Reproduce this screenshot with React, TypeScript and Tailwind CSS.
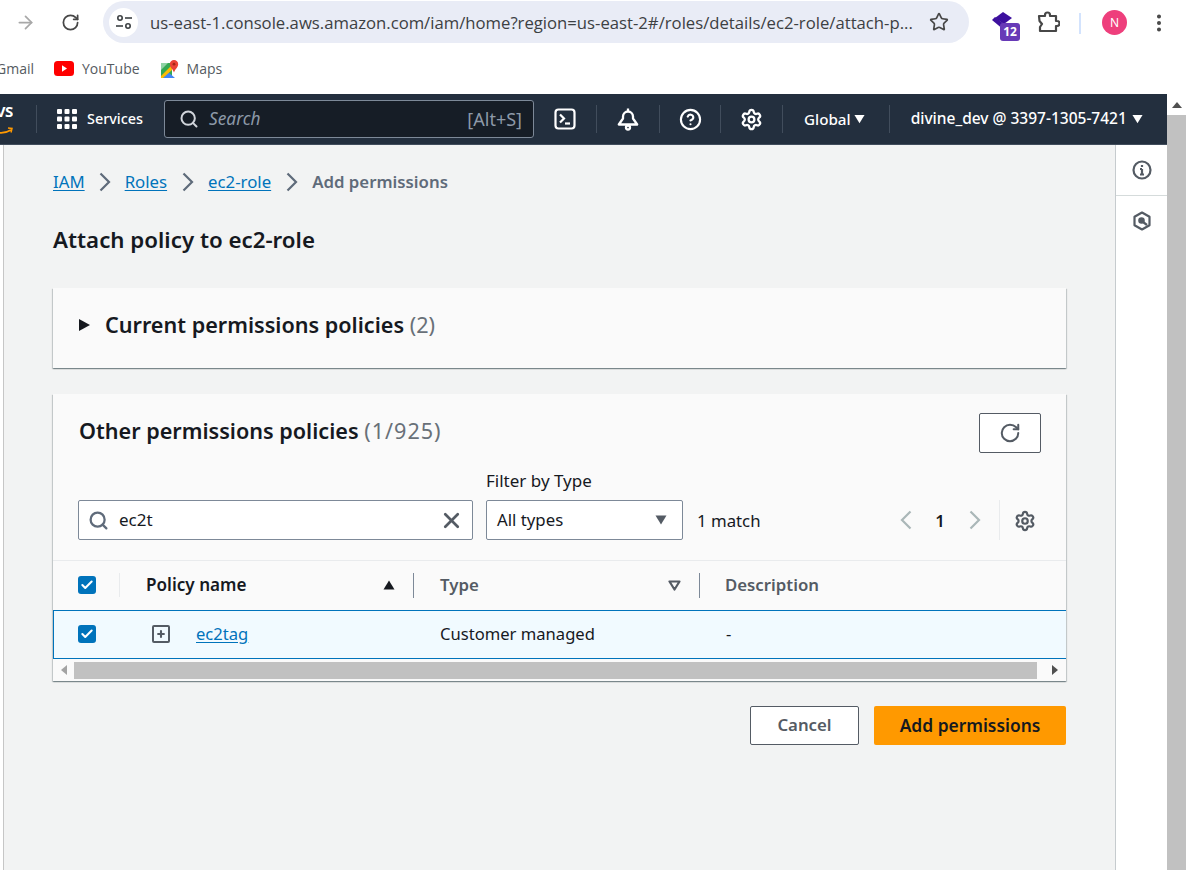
import { ArrowRight, RotateCw, Star, Search, X, Settings, Check, Plus, CircleHelp, EllipsisVertical } from 'lucide-react'

const font = { fontFamily: '"Noto Sans", sans-serif' }

function Divider({ className = '' }: { className?: string }) {
  return <div className={`w-px h-[28px] bg-[#414d5c] shrink-0 ${className}`} />
}

function Tune() {
  return (
    <svg width="20" height="20" viewBox="0 0 20 20" fill="none" stroke="#3c4043" strokeWidth="1.6">
      <circle cx="6" cy="6" r="2.2" />
      <path d="M11 6h7" />
      <path d="M2 14h7" />
      <circle cx="14" cy="14" r="2.2" />
    </svg>
  )
}

function Caret({ className = '' }: { className?: string }) {
  return (
    <svg width="12" height="10" viewBox="0 0 12 10" className={className}>
      <path d="M0.5 0.5h11L6 9.5z" fill="currentColor" />
    </svg>
  )
}

function Chevron({ left = false, className = '' }: { left?: boolean; className?: string }) {
  return (
    <svg width="12" height="20" viewBox="0 0 12 20" fill="none" stroke="currentColor" strokeWidth="2.2" className={`shrink-0 ${className}`}>
      <path d={left ? 'M10.5 1.500L2 10l8.500 8.500' : 'M1.500 1.500L10 10l-8.500 8.500'} />
    </svg>
  )
}

function Checkbox() {
  return (
    <div className="w-[18px] h-[18px] rounded-[3px] bg-[#0073bb] flex items-center justify-center">
      <Check size={14} strokeWidth={3.500} className="text-white" />
    </div>
  )
}

function BrowserBar() {
  return (
    <div className="h-[47px] bg-white flex items-start shrink-0">
      <ArrowRight size={21} strokeWidth={2} className="text-[#a8a8a8] ml-[15px] mt-[12px]" />
      <RotateCw size={19} strokeWidth={2.2} className="text-[#474747] ml-[25px] mt-[13px]" />
      <div className="ml-[23px] mt-px w-[866px] h-[42px] rounded-full bg-[#e9ecf6] flex items-center">
        <div className="ml-[6px] w-[29px] h-[29px] rounded-full bg-white flex items-center justify-center">
          <Tune />
        </div>
        <span className="ml-[12px] pt-[2px] text-[16.700px] text-[#3c4043] w-[766px] whitespace-nowrap overflow-hidden" style={{ fontFamily: '"Open Sans", sans-serif' }}>
          us-east-1.console.aws.amazon.com/iam/home?region=us-east-2#/roles/details/ec2-role/attach-p...
        </span>
        <Star size={20} strokeWidth={2} className="text-[#474747] ml-[13px]" />
      </div>
      <div className="relative ml-[23px] mt-[12px] w-[28px] h-[29px]">
        <svg width="21" height="19" viewBox="0 0 21 19" className="absolute left-0 top-0">
          <path d="M11 0l9 6-8 6-9-6z" fill="#3d109e" />
          <path d="M0 8l3-3 9 7v6z" fill="#3d109e" />
        </svg>
        <div className="absolute left-[8px] top-[11px] w-[20px] h-[18px] rounded-[3px] bg-[#673ab7] text-white text-[12px] font-bold flex items-center justify-center" style={font}>12</div>
      </div>
      <svg width="24" height="24" viewBox="0 0 24 24" fill="none" stroke="#474747" strokeWidth="2.200" strokeLinejoin="round" className="ml-[16px] mt-[11px]">
        <path d="M3 5h6v-1a2.500 2.500 0 0 1 5 0v1h6v5h1a2.500 2.500 0 0 1 0 5h-1v5H4v-4l2-3-2.500-3z" />
      </svg>
      <div className="ml-[19px] mt-[13px] w-[2px] h-[21px] bg-[#d3e3fd]" />
      <div className="ml-[21px] mt-[10px] w-[25px] h-[25px] rounded-full bg-[#ee3f7c] text-white text-[12px] flex items-center justify-center" style={font}>N</div>
      <EllipsisVertical size={22} strokeWidth={2.400} className="text-[#474747] ml-[21px] mt-[12px]" />
    </div>
  )
}

function Bookmarks() {
  return (
    <div className="h-[47px] pb-[4px] bg-white flex items-center shrink-0 text-[14px] text-[#555b61] whitespace-nowrap" style={{ fontFamily: '"Open Sans", sans-serif' }}>
      <div className="w-[34px] overflow-hidden flex justify-end shrink-0">
        <span>Gmail</span>
      </div>
      <svg width="20" height="15" viewBox="0 0 20 15" className="ml-[20px]">
        <rect width="20" height="15" rx="3.500" fill="#f00" />
        <path d="M8 4.200l5 3.300-5 3.300z" fill="#fff" />
      </svg>
      <span className="ml-[8px]">YouTube</span>
      <svg width="19" height="20" viewBox="0 0 19 20" className="ml-[20px]">
        <path d="M1 4h11v15H1z" fill="#34a853" />
        <path d="M3 19l5-6 7 6z" fill="#4285f4" />
        <path d="M1 17l11-11v5L3 19H1z" fill="#fbbc04" />
        <path d="M1 4h7L1 11z" fill="#8fd3a5" />
        <path d="M14 1a4.200 4.200 0 0 1 4.200 4.200c0 3-3 4.600-4.200 8.300-1.200-3.700-4.200-5.300-4.200-8.300A4.200 4.200 0 0 1 14 1z" fill="#ea4335" />
        <circle cx="14" cy="5.200" r="1.400" fill="#a52714" />
      </svg>
      <span className="ml-[8px]">Maps</span>
    </div>
  )
}

function AwsNav() {
  return (
    <div className="h-[51px] bg-[#232f3e] flex items-center shrink-0 text-white text-[15.200px] font-medium whitespace-nowrap border-b border-[#414d5c] mr-[19px]" style={font}>
      <div className="relative w-[13px] h-[36px] overflow-hidden shrink-0">
        <span className="absolute right-0 top-[-1px] text-[15px] font-bold tracking-tight">VS</span>
        <svg width="16" height="10" viewBox="0 0 16 10" className="absolute left-[-3px] bottom-0">
          <path d="M-6 2c6 5 13 5 20 1" fill="none" stroke="#f90" strokeWidth="1.800" />
          <path d="M11 1l4 .5-1 4" fill="none" stroke="#f90" strokeWidth="1.500" />
        </svg>
      </div>
      <Divider className="ml-[23px]" />
      <svg width="20" height="20" viewBox="0 0 20 20" fill="#fff" className="ml-[20px]">
        <rect x="0" y="0" width="5" height="5" rx="1" />
        <rect x="7.500" y="0" width="5" height="5" rx="1" />
        <rect x="15" y="0" width="5" height="5" rx="1" />
        <rect x="0" y="7.500" width="5" height="5" rx="1" />
        <rect x="7.500" y="7.500" width="5" height="5" rx="1" />
        <rect x="15" y="7.500" width="5" height="5" rx="1" />
        <rect x="0" y="15" width="5" height="5" rx="1" />
        <rect x="7.500" y="15" width="5" height="5" rx="1" />
        <rect x="15" y="15" width="5" height="5" rx="1" />
      </svg>
      <span className="ml-[10px] w-[57px] text-[14.400px]">Services</span>
      <div className="ml-[20px] w-[370px] h-[38px] bg-[#161d26] border border-[#7d8998] rounded-[3px] flex items-center pl-[14px] pr-[11px] font-normal">
        <Search size={20} strokeWidth={2.400} className="text-[#d1d5db]" />
        <span className="ml-[10px] italic text-[17.300px] text-[#8d99a8]">Search</span>
        <span className="ml-auto text-[18px] text-[#8d99a8]">[Alt+S]</span>
      </div>
      <div className="w-[62px] flex justify-center">
        <svg width="22" height="22" viewBox="0 0 22 22" fill="none" stroke="#fff" strokeWidth="2.200">
          <rect x="1.500" y="1.500" width="19" height="19" rx="3" />
          <path d="M6 6.500l4 4-4 4" />
          <path d="M11 15.500h5" />
        </svg>
      </div>
      <Divider />
      <div className="w-[62px] flex justify-center">
        <svg width="22" height="24" viewBox="0 0 22 24" fill="none" stroke="#fff" strokeWidth="2.300" strokeLinejoin="round">
          <path d="M11 1.500v2.500M1.800 17.500L6 11.500V9.500a5 5 0 0 1 10 0v2l4.200 6z" />
          <circle cx="11" cy="20.500" r="2" />
        </svg>
      </div>
      <Divider />
      <div className="w-[60px] flex justify-center">
        <CircleHelp size={23} strokeWidth={2.200} />
      </div>
      <Divider />
      <div className="w-[61px] flex justify-center">
        <Settings size={23} strokeWidth={2.400} />
      </div>
      <Divider />
      <span className="ml-[21px]">Global</span>
      <Caret className="ml-[3px] w-[11px]" />
      <Divider className="ml-[24px]" />
      <span className="ml-[21px] text-[15.500px]">divine_dev @ 3397-1305-7421</span>
      <Caret className="ml-[5px] w-[11px]" />
    </div>
  )
}

function PolicyTable() {
  return (
    <div className="mt-[20px]">
      <div className="grid grid-cols-[67px_294px_286px_1fr] h-[50px] items-center border-t border-[#e9ebed] pb-[1px] text-[16.800px] font-semibold">
        <div className="pl-[25px] h-[24px] flex items-center border-r border-[#e9ebed]">
          <Checkbox />
        </div>
        <div className="pl-[26px] pr-[17px] flex items-center justify-between h-[25px] border-r border-[#7d8998] text-[#16191f] text-[17.100px]">
          <span>Policy name</span>
          <Caret className="rotate-180 w-[14px] text-[#16191f]" />
        </div>
        <div className="pl-[26px] pr-[18px] flex items-center justify-between h-[25px] border-r border-[#7d8998] text-[#545b64]">
          <span>Type</span>
          <svg width="13" height="11" viewBox="0 0 13 11" fill="none" stroke="#545b64" strokeWidth="2.200" strokeLinejoin="round">
            <path d="M1.500 1.500h10L6.500 9.500z" />
          </svg>
        </div>
        <div className="pl-[25px] text-[#545b64]">Description</div>
      </div>
      <div className="grid grid-cols-[67px_294px_286px_1fr] h-[49px] pb-[1px] items-center bg-[#f1faff] border border-[#0073bb] border-r-0 text-[16.600px] text-[#16191f]">
        <div className="pl-[24px]">
          <Checkbox />
        </div>
        <div className="flex items-center pl-[31px]">
          <div className="w-[18px] h-[18px] border-2 border-[#545b64] rounded-[2px] flex items-center justify-center">
            <Plus size={10} strokeWidth={5} className="text-[#545b64]" />
          </div>
          <a className="ml-[26px] text-[#0073bb] underline underline-offset-2">ec2tag</a>
        </div>
        <div className="pl-[25px]">Customer managed</div>
        <div className="pl-[25px]">-</div>
      </div>
      <div className="h-[22px] flex items-center">
        <svg width="6" height="10" viewBox="0 0 6 10" className="ml-[8px]"><path d="M6 0v10L0 5z" fill="#a3a3a3" /></svg>
        <div className="ml-[7px] w-[963px] h-[17px] bg-[#c1c1c1]" />
        <svg width="6" height="10" viewBox="0 0 6 10" className="ml-[15px]"><path d="M0 0v10l6-5z" fill="#505050" /></svg>
      </div>
    </div>
  )
}

const panel = 'bg-[#fafafa] shadow-[0_1px_1px_0_rgba(0,28,36,0.3),1px_1px_1px_0_rgba(0,28,36,0.15),-1px_1px_1px_0_rgba(0,28,36,0.15)]'

function Content() {
  return (
    <div className="flex-1 min-w-0 bg-[#f2f3f3] border-l border-[#c6c6c6] ml-[3px] pl-[49px] pr-[49px]">
      <div className="mt-[25px] h-[24px] flex items-center text-[16.800px] text-[#0073bb] whitespace-nowrap">
        <a className="underline underline-offset-2">IAM</a>
        <Chevron className="text-[#5f6b7a] mx-[14px]" />
        <a className="underline underline-offset-2">Roles</a>
        <Chevron className="text-[#5f6b7a] mx-[14.500px]" />
        <a className="underline underline-offset-2">ec2-role</a>
        <Chevron className="text-[#5f6b7a] mx-[14.500px]" />
        <span className="text-[#5f6b7a] font-semibold">Add permissions</span>
      </div>
      <h1 className="mt-[31px] h-[30px] flex items-center text-[22.300px] font-semibold text-[#16191f]">Attach policy to ec2-role</h1>

      <div className={`mt-[33px] h-[80px] pb-[6px] flex items-center pl-[26px] ${panel}`}>
        <svg width="11" height="12" viewBox="0 0 11 12"><path d="M0 0l11 6-11 6z" fill="#16191f" /></svg>
        <h2 className="ml-[15px] text-[21.600px] font-semibold text-[#16191f]">
          Current permissions policies <span className="font-normal text-[#687078]">(2)</span>
        </h2>
      </div>

      <div className={`mt-[26px] pt-[19px] ${panel}`}>
        <div className="flex items-center justify-between pl-[26px] pr-[25px] h-[40px]">
          <h2 className="pb-[4px] text-[21.600px] font-semibold text-[#16191f]">
            Other permissions policies <span className="font-normal text-[#687078] tracking-[1px]">(1/925)</span>
          </h2>
          <button className="w-[62px] h-[40px] bg-white border border-[#545b64] rounded-[2px] flex items-center justify-center">
            <RotateCw size={22} strokeWidth={2.200} className="text-[#545b64]" />
          </button>
        </div>
        <div className="mt-[18px] pl-[25px] pr-[25px] flex items-end">
          <div className="w-[395px] h-[40px] bg-white border border-[#7d8998] rounded-[2px] flex items-center pl-[9px] pr-[8px] text-[17px] text-[#16191f]">
            <Search size={21} strokeWidth={2.600} className="text-[#5f6b7a]" />
            <span className="ml-[10px]">ec2t</span>
            <X size={25} strokeWidth={2.600} className="text-[#545b64] ml-auto" />
          </div>
          <div className="ml-[13px] w-[197px]">
            <div className="text-[17px] text-[#16191f] leading-[20px] mb-[9px]">Filter by Type</div>
            <div className="h-[40px] bg-white border border-[#7d8998] rounded-[2px] flex items-center justify-between pl-[10px] pr-[14px] text-[16.800px] text-[#16191f]">
              <span>All types</span>
              <Caret className="text-[#545b64] w-[14px]" />
            </div>
          </div>
          <span className="ml-[14px] h-[40px] pt-[1px] flex items-center text-[16.800px] text-[#16191f]">1 match</span>
          <div className="ml-auto h-[40px] flex items-center">
            <Chevron left className="text-[#aab7b8]" />
            <span className="ml-[23px] w-[10px] pt-[1px] text-center text-[16.800px] font-semibold text-[#16191f]">1</span>
            <Chevron className="text-[#aab7b8] ml-[24px]" />
            <div className="ml-[18px] w-px h-[40px] bg-[#e9ebed]" />
            <Settings size={22} strokeWidth={2.400} className="text-[#545b64] ml-[14px] mr-[5px] mt-[2px]" />
          </div>
        </div>
        <PolicyTable />
      </div>

      <div className="mt-[25px] flex justify-end">
        <button className="w-[109px] h-[39px] pb-[1px] bg-white border border-[#545b64] rounded-[2px] text-[16.800px] font-semibold text-[#545b64]">Cancel</button>
        <button className="ml-[15px] w-[192px] h-[39px] pb-[1px] bg-[#ff9900] rounded-[2px] text-[17.400px] font-semibold text-[#16191f]">Add permissions</button>
      </div>
    </div>
  )
}

function SideRail() {
  return (
    <div className="w-[52px] bg-white border-l border-[#c6cbce] shrink-0">
      <div className="h-[51px] border-b border-[#d5dbdb] flex items-center justify-center">
        <svg width="20" height="20" viewBox="0 0 20 20" fill="none" stroke="#545b64" strokeWidth="2.200">
          <circle cx="10" cy="10" r="8.500" />
          <path d="M10 5v2M10 9v5M8 14.500h4M8 9h2" />
        </svg>
      </div>
      <div className="h-[50px] flex items-center justify-center">
        <svg width="20" height="20" viewBox="0 0 20 20" fill="none" stroke="#545b64" strokeWidth="2.200" strokeLinejoin="round">
          <path d="M10 1.500l7.500 4.300v8.400L10 18.500l-7.500-4.300V5.800z" />
          <circle cx="9.500" cy="9.500" r="2.200" fill="#545b64" />
          <path d="M11 11l4 3" />
        </svg>
      </div>
    </div>
  )
}

export default function App() {
  return (
    <div className="relative w-[1186px] h-[870px] overflow-hidden bg-white" style={font}>
      <BrowserBar />
      <Bookmarks />
      <AwsNav />
      <div className="flex h-[725px] mr-[19px]">
        <Content />
        <SideRail />
      </div>
      {/* window scrollbar */}
      <div className="absolute right-0 top-[94px] bottom-0 w-[19px] bg-white flex flex-col items-center">
        <svg width="10" height="6" viewBox="0 0 10 6" className="mt-[8px]"><path d="M0 6h10L5 0z" fill="#505050" /></svg>
        <div className="mt-[7px] w-full flex-1 bg-[#c1c1c1]" />
      </div>
    </div>
  )
}
